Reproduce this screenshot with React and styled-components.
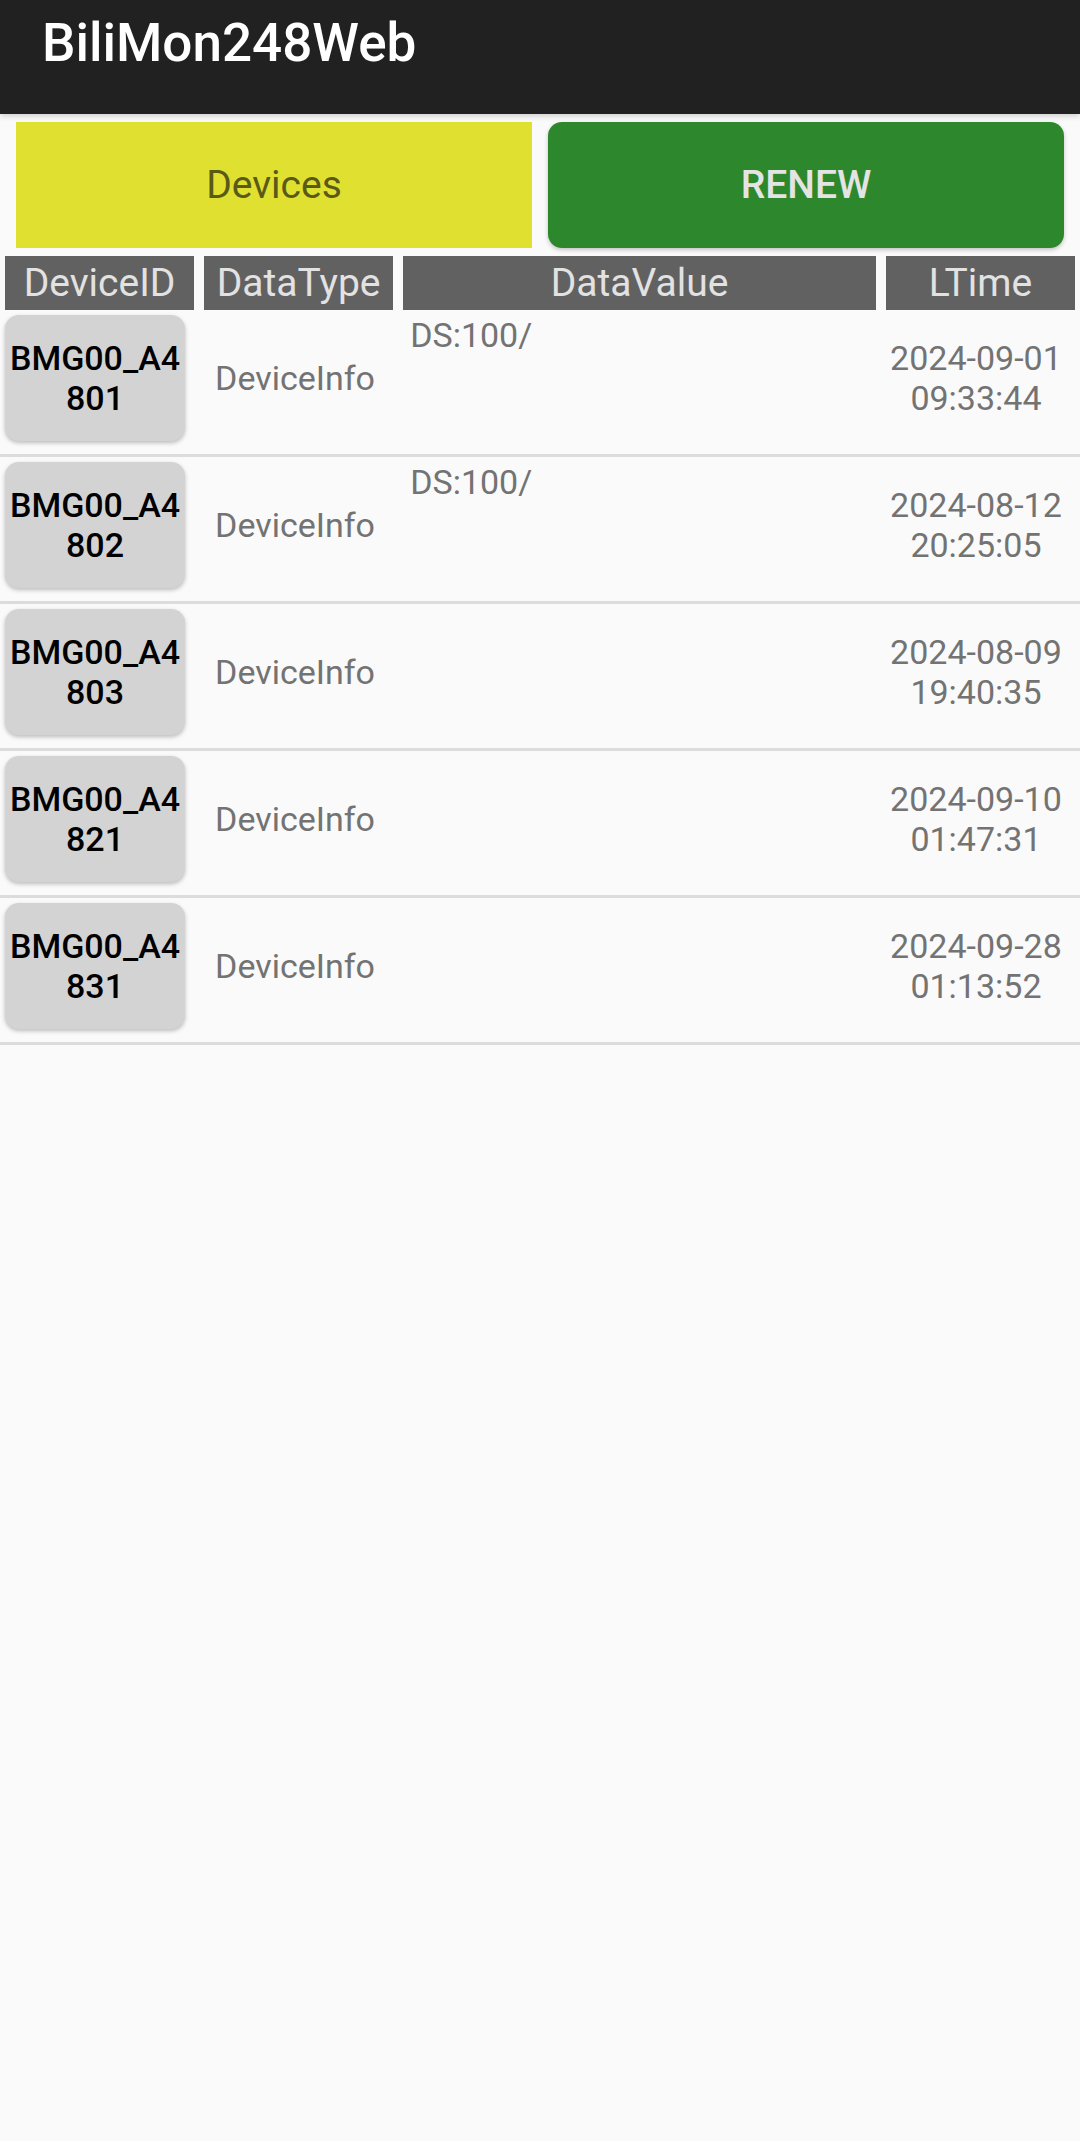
import styled, { createGlobalStyle } from "styled-components"

const devices = [
	{ id: "BMG00_A4801", type: "DeviceInfo", value: "DS:100/", time: "2024-09-01 09:33:44" },
	{ id: "BMG00_A4802", type: "DeviceInfo", value: "DS:100/", time: "2024-08-12 20:25:05" },
	{ id: "BMG00_A4803", type: "DeviceInfo", value: "", time: "2024-08-09 19:40:35" },
	{ id: "BMG00_A4821", type: "DeviceInfo", value: "", time: "2024-09-10 01:47:31" },
	{ id: "BMG00_A4831", type: "DeviceInfo", value: "", time: "2024-09-28 01:13:52" },
]

const columns = ["DeviceID", "DataType", "DataValue", "LTime"]

function App() {
	return (
		<>
			<GlobalStyle />
			<StyledPage>
				<StyledAppBar>
					<h1>BiliMon248Web</h1>
				</StyledAppBar>
				<StyledButtonBar>
					<StyledTabButton>Devices</StyledTabButton>
					<StyledRenewButton>RENEW</StyledRenewButton>
				</StyledButtonBar>
				<StyledHeaderRow>
					{columns.map((col) => (
						<StyledHeaderCell key={col}>{col}</StyledHeaderCell>
					))}
				</StyledHeaderRow>
				{devices.map((device) => (
					<StyledRow key={device.id}>
						<StyledDeviceButton>{device.id}</StyledDeviceButton>
						<StyledTypeCell>{device.type}</StyledTypeCell>
						<StyledValueCell>{device.value}</StyledValueCell>
						<StyledTimeCell>{device.time}</StyledTimeCell>
					</StyledRow>
				))}
			</StyledPage>
		</>
	)
}

const GlobalStyle = createGlobalStyle`
	* {
		box-sizing: border-box;
	}

	body {
		margin: 0;
		background-color: #fafafa;
		font-family: Roboto, "Noto Sans", sans-serif;
	}
`

const StyledPage = styled.div`
	min-height: 2141px;
	background-color: #fafafa;
`

const StyledAppBar = styled.header`
	height: 114px;
	padding: 12px 42px 0;
	background-color: #212121;
	box-shadow: 0 2px 6px rgba(0, 0, 0, 0.18);

	h1 {
		margin: 0;
		font-size: 53px;
		font-weight: 500;
		line-height: 1.172;
		color: #ffffff;
	}
`

const StyledButtonBar = styled.div`
	display: grid;
	grid-template-columns: 1fr 1fr;
	gap: 16px;
	padding: 8px 16px 0;
`

const StyledButtonBase = styled.button`
	height: 126px;
	border: 0 none;
	font-family: Roboto, sans-serif;
	font-size: 39px;
	cursor: pointer;
`

const StyledTabButton = styled(StyledButtonBase)`
	background-color: #e0e030;
	color: #5a5a18;
	font-weight: 400;
`

const StyledRenewButton = styled(StyledButtonBase)`
	background-color: #2d882d;
	color: #e4e4e4;
	font-weight: 500;
	border-radius: 14px;
	box-shadow: 0 2px 4px rgba(0, 0, 0, 0.22);
`

const StyledGrid = styled.div`
	display: grid;
	grid-template-columns: 2fr 2fr 5fr 2fr;
	column-gap: 10px;
	padding-left: 5px;
	padding-right: 5px;
`

const StyledHeaderRow = styled(StyledGrid)`
	padding-top: 8px;
`

const StyledHeaderCell = styled.div`
	display: flex;
	align-items: center;
	justify-content: center;
	height: 54px;
	background-color: #616161;
	color: #e2e2e2;
	font-size: 39px;
	line-height: 1;
`

const StyledRow = styled(StyledGrid)`
	padding-top: 5px;
	padding-bottom: 13px;
	border-bottom: 3px solid #dcdcdc;
	font-size: 34px;
	line-height: 40px;
`

const StyledDeviceButton = styled.button`
	width: 180px;
	height: 126px;
	padding: 0 4px;
	border: 0 none;
	border-radius: 14px;
	background-color: #d3d3d3;
	box-shadow: 0 2px 4px rgba(0, 0, 0, 0.25);
	color: #000000;
	font-family: Roboto, sans-serif;
	font-size: 34px;
	font-weight: 500;
	line-height: 40px;
	word-break: break-all;
	text-align: center;
`

const StyledTypeCell = styled.div`
	display: flex;
	align-items: center;
	padding-left: 11px;
	color: #737373;
`

const StyledValueCell = styled.div`
	padding-left: 7px;
	color: #737373;
`

const StyledTimeCell = styled.div`
	display: flex;
	align-items: center;
	justify-content: center;
	padding-right: 9px;
	text-align: center;
	color: #737373;
`

export default App
